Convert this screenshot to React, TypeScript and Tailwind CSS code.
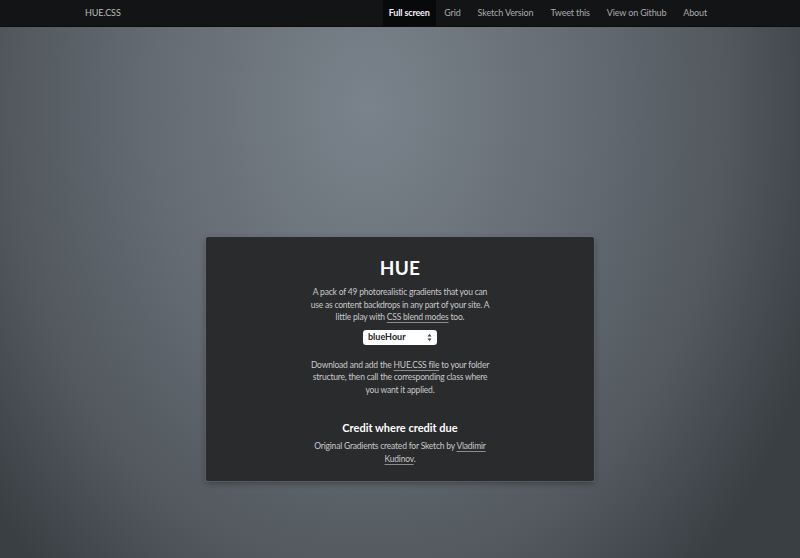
import React from "react";

export default function App() {
  const font = { fontFamily: "Lato, 'Open Sans', sans-serif" };
  const link = "underline decoration-[#8a8c8e] underline-offset-[2px]";
  return (
    <div className="w-[800px] h-[558px] flex flex-col overflow-hidden" style={font}>
      <nav className="h-[27px] bg-[#131415] border-b border-[#0b0c0d] flex justify-center shrink-0">
        <div className="w-[630px] flex items-stretch justify-between">
          <div className="flex items-center text-[9px] tracking-[-0.1px] text-[#b9bcbf]">HUE.CSS</div>
          <ul className="flex items-stretch text-[9px] tracking-[-0.15px] text-[#a9acaf]">
            <li className="flex items-center px-[6px] bg-[#08090a] text-[#f2f2f2] font-bold">Full screen</li>
            <li className="flex items-center px-[8.5px]">Grid</li>
            <li className="flex items-center px-[8.5px]">Sketch Version</li>
            <li className="flex items-center px-[8.5px]">Tweet this</li>
            <li className="flex items-center px-[8.5px]">View on Github</li>
            <li className="flex items-center pl-[8.5px] pr-[8px]">About</li>
          </ul>
        </div>
      </nav>
      <main className="flex-1 flex justify-center pt-[210px] bg-[radial-gradient(ellipse_60%_120%_at_46%_15%,#7a828b_0%,#646b72_45%,#52585e_75%,#3a3f44_100%)]">
        <div className="w-[388px] h-[244px] bg-[#2a2b2d] rounded-[2px] shadow-[0_0_0_1px_rgba(120,125,130,0.35),0_2px_6px_rgba(0,0,0,0.35)] flex flex-col items-center pt-[18px] text-[#c9cacb]">
          <h1 className="text-[19px] font-bold text-white leading-[26px] tracking-[0.3px]">HUE</h1>
          <p className="w-[182px] text-center text-[8.5px] tracking-[-0.2px] leading-[12.5px] mt-[5px]">
            A pack of 49 photorealistic gradients that you can use as content backdrops in any part of your site. A little play with{" "}
            <span className={link}>CSS blend modes</span> too.
          </p>
          <div className="mt-[6px] w-[74px] h-[15px] bg-white rounded-[3px] flex items-center justify-between px-[5px] text-[#222] text-[9px] font-bold">
            <span>blueHour</span>
            <svg width="5" height="9" viewBox="0 0 5 9">
              <path d="M0.5 3.5 L2.5 1 L4.5 3.5 Z M0.5 5.5 L2.5 8 L4.5 5.5 Z" fill="#333" />
            </svg>
          </div>
          <p className="w-[182px] text-center text-[8.5px] tracking-[-0.2px] leading-[12.5px] mt-[14px]">
            Download and add the <span className={link}>HUE.CSS file</span> to your folder structure, then call the corresponding class where you want it applied.
          </p>
          <h2 className="mt-[25px] text-[11px] font-bold text-white leading-[14px]">Credit where credit due</h2>
          <p className="w-[182px] text-center text-[8.5px] tracking-[-0.2px] leading-[12.5px] mt-[5px]">
            Original Gradients created for Sketch by <span className={link}>Vladimir Kudinov</span>.
          </p>
        </div>
      </main>
    </div>
  );
}
